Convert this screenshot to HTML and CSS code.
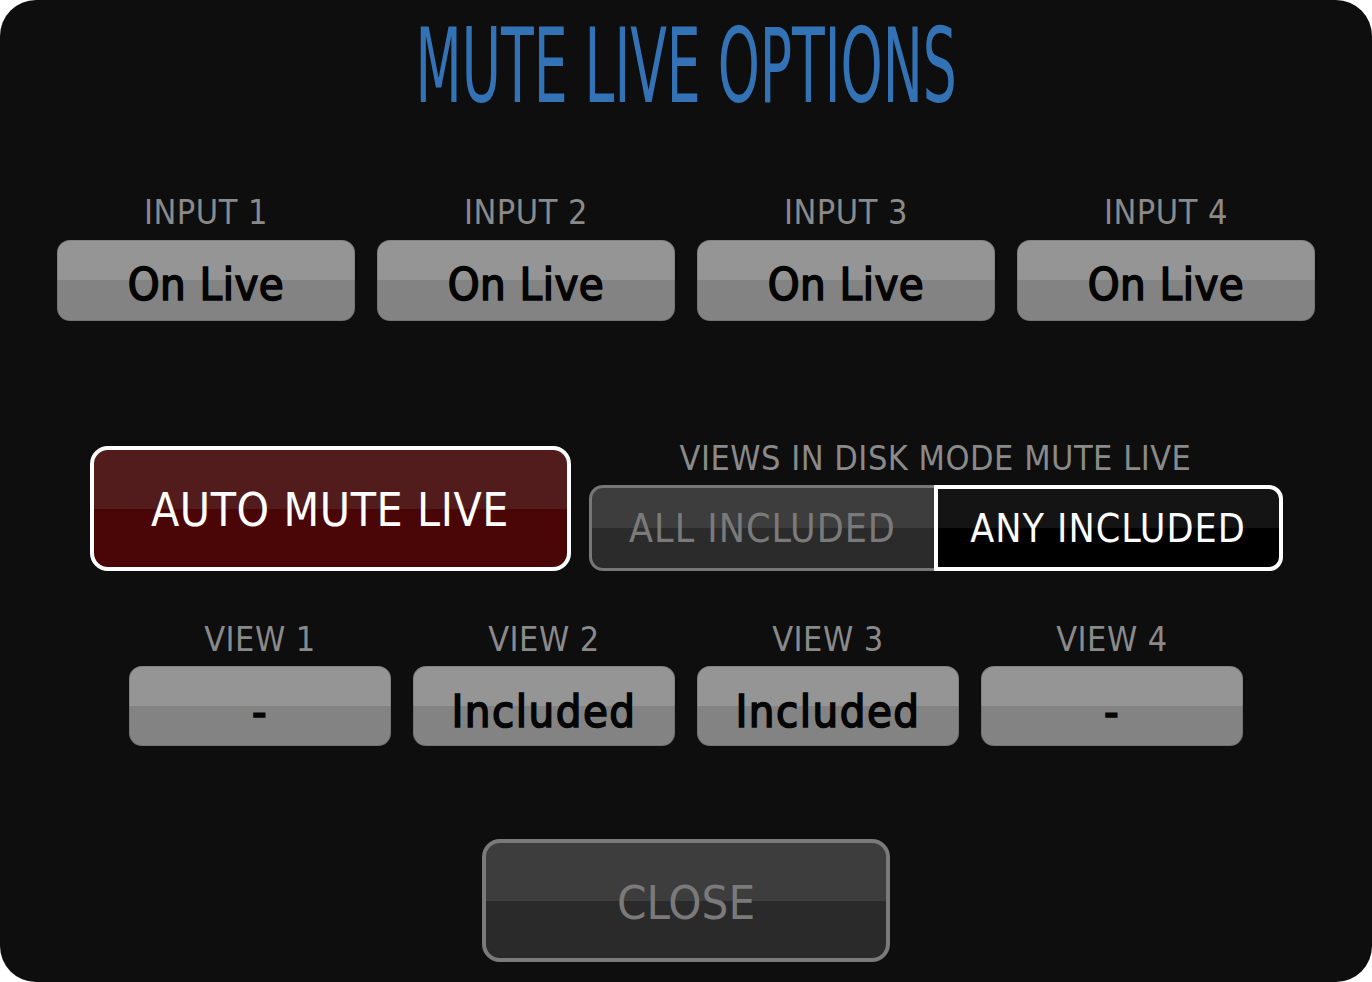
FILE: index.html
```html
<!DOCTYPE html>
<html>
<head>
<meta charset="utf-8">
<link rel="stylesheet" href="styles.css">
</head>
<body>
<div class="panel">
  <h1 class="title"><span class="title-text">MUTE LIVE OPTIONS</span></h1>

  <div class="row inputs">
    <div class="cell"><div class="label">INPUT 1</div><div class="btn">On Live</div></div>
    <div class="cell"><div class="label">INPUT 2</div><div class="btn">On Live</div></div>
    <div class="cell"><div class="label">INPUT 3</div><div class="btn">On Live</div></div>
    <div class="cell"><div class="label">INPUT 4</div><div class="btn">On Live</div></div>
  </div>

  <div class="mid">
    <div class="auto">AUTO MUTE LIVE</div>
    <div class="mode">
      <div class="label wide">VIEWS IN DISK MODE MUTE LIVE</div>
      <div class="seg">
        <div class="seg-off">ALL INCLUDED</div>
        <div class="seg-on">ANY INCLUDED</div>
      </div>
    </div>
  </div>

  <div class="row views">
    <div class="cell"><div class="label">VIEW 1</div><div class="btn vbtn">-</div></div>
    <div class="cell"><div class="label">VIEW 2</div><div class="btn vbtn">Included</div></div>
    <div class="cell"><div class="label">VIEW 3</div><div class="btn vbtn">Included</div></div>
    <div class="cell"><div class="label">VIEW 4</div><div class="btn vbtn">-</div></div>
  </div>

  <div class="close">CLOSE</div>
</div>
</body>
</html>
```

FILE: styles.css
```css
html, body {
  margin: 0;
  padding: 0;
  background: #ffffff;
}

body {
  width: 1372px;
  height: 982px;
  overflow: hidden;
  font-family: "DejaVu Sans Condensed", "DejaVu Sans", sans-serif;
  font-stretch: condensed;
}

.panel {
  width: 1372px;
  height: 982px;
  box-sizing: border-box;
  background: #0e0e0e;
  border-radius: 36px;
  padding-top: 15px;
  display: flex;
  flex-direction: column;
  align-items: center;
}

.title {
  margin: 0;
  height: 103px;
  font-size: 103px;
  line-height: 103px;
  font-weight: normal;
  color: #3372b4;
  text-align: center;
  white-space: nowrap;
}

.title-text {
  display: inline-block;
  transform: scaleX(0.578);
  transform-origin: center;
}

.row {
  display: grid;
  grid-template-columns: repeat(4, 298px);
  column-gap: 22px;
  justify-content: center;
}

.inputs {
  margin-top: 77px;
}

.views {
  margin-top: 51px;
  grid-template-columns: repeat(4, 262px);
}

.cell {
  display: flex;
  flex-direction: column;
  align-items: center;
}

.label {
  height: 34px;
  font-size: 34px;
  line-height: 34px;
  color: #8a8a8a;
  letter-spacing: 0.5px;
  white-space: nowrap;
  text-align: center;
}

.btn {
  margin-top: 11px;
  width: 100%;
  height: 81px;
  box-sizing: border-box;
  padding-top: 8px;
  line-height: 73px;
  border-radius: 13px;
  background: linear-gradient(#959595 0, #959595 50%, #838383 50%, #838383 100%);
  box-shadow: inset 0 0 0 1px rgba(0, 0, 0, 0.12);
  color: #050505;
  font-size: 45px;
  font-weight: normal;
  -webkit-text-stroke: 1.6px #050505;
  letter-spacing: 0.5px;
  text-align: center;
}

.vbtn {
  margin-top: 10px;
  height: 80px;
  padding-top: 11px;
  line-height: 69px;
  letter-spacing: 1.5px;
}

.mid {
  margin-top: 120px;
  display: flex;
  align-items: flex-end;
  gap: 18px;
}

.auto {
  width: 481px;
  height: 125px;
  box-sizing: border-box;
  border: 4px solid #ffffff;
  border-radius: 18px;
  background: linear-gradient(#531c1c 0, #531c1c 50%, #4a0606 50%, #4a0606 100%);
  color: #ffffff;
  font-size: 46px;
  line-height: 113px;
  padding-top: 4px;
  letter-spacing: 0.6px;
  text-align: center;
}

.mode {
  display: flex;
  flex-direction: column;
  align-items: center;
}

.seg {
  margin-top: 10px;
  display: flex;
  height: 86px;
}

.seg-off {
  width: 345px;
  box-sizing: border-box;
  border: 3px solid #777777;
  border-right: none;
  border-radius: 14px 0 0 14px;
  background: linear-gradient(#3d3d3d 0, #3d3d3d 50%, #2b2b2b 50%, #2b2b2b 100%);
  color: #7a7a7a;
  font-size: 39px;
  line-height: 76px;
  padding-top: 3px;
  letter-spacing: 1px;
  text-align: center;
}

.seg-on {
  width: 349px;
  box-sizing: border-box;
  border: 4px solid #ffffff;
  border-radius: 0 14px 14px 0;
  background: linear-gradient(#141414 0, #141414 50%, #000000 50%, #000000 100%);
  color: #ffffff;
  font-size: 39px;
  line-height: 74px;
  padding-top: 3px;
  letter-spacing: 1px;
  text-align: center;
}

.close {
  margin-top: 93px;
  width: 408px;
  height: 123px;
  box-sizing: border-box;
  border: 4px solid #7a7a7a;
  border-radius: 18px;
  background: linear-gradient(#3d3d3d 0, #3d3d3d 50%, #2a2a2a 50%, #2a2a2a 100%);
  color: #7a7a7a;
  font-size: 47px;
  line-height: 111px;
  padding-top: 4px;
  text-align: center;
}
```
